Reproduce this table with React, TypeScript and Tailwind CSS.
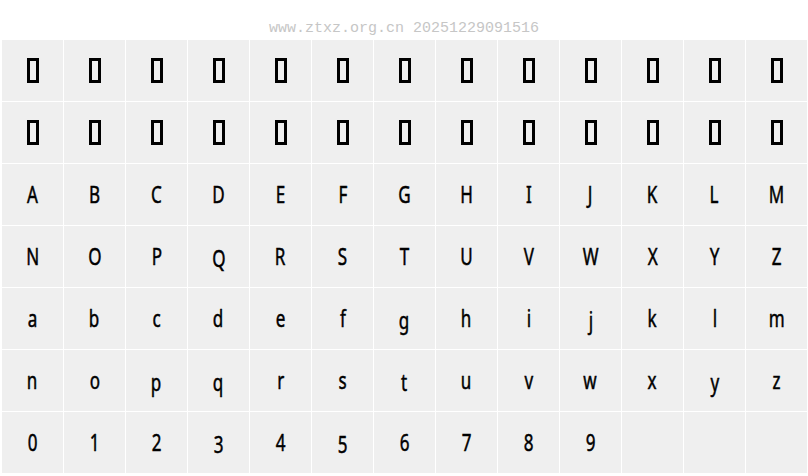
import React from 'react'

// glyph preview sheet: two rows of missing-glyph boxes, then A-Z, a-z, 0-9
const rows: (string | null)[][] = [
  Array(13).fill(null),
  Array(13).fill(null),
  'ABCDEFGHIJKLM'.split(''),
  'NOPQRSTUVWXYZ'.split(''),
  'abcdefghijklm'.split(''),
  'nopqrstuvwxyz'.split(''),
  [...'0123456789'.split(''), '', '', ''],
]

// the sample font sits a couple of glyphs a little below the line
const low = 'Qgjpqyt35'

function Cell({ ch }: { ch: string | null }) {
  return (
    <div className="h-[61px] bg-[#efefef] flex items-center justify-center">
      {ch === null ? (
        <div className="w-3 h-[25px] border-[3px] border-black" />
      ) : (
        <span
          className={
            'inline-block scale-x-[0.74] text-[23px] leading-none text-black [-webkit-text-stroke:0.5px_black] font-[\'DejaVu_Sans\',sans-serif] ' +
            (ch && low.includes(ch) ? 'translate-y-[2px]' : '')
          }
        >
          {ch}
        </span>
      )}
    </div>
  )
}

export default function App() {
  return (
    <div className="w-[808px] h-[476px] bg-white overflow-hidden">
      <div className="h-10 flex items-end justify-center pb-[4px]">
        <span className="text-[15px] leading-none text-[#c6c6c6] font-['Liberation_Mono',monospace]">
          www.ztxz.org.cn 20251229091516
        </span>
      </div>
      <div className="ml-[2px] w-[805px] grid grid-cols-13 gap-px">
        {rows.flat().map((ch, i) => (
          <Cell key={i} ch={ch} />
        ))}
      </div>
    </div>
  )
}
